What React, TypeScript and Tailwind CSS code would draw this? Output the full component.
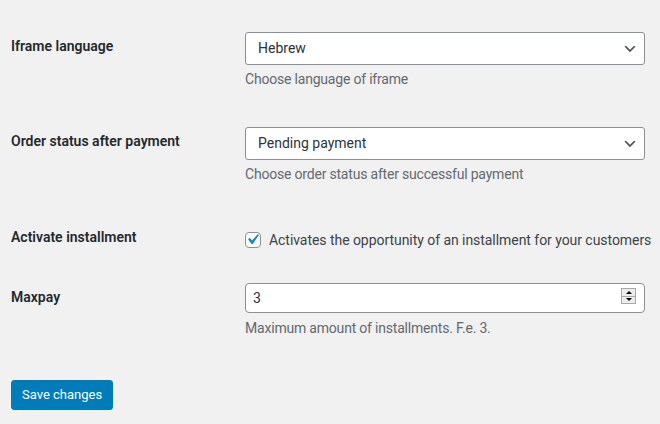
import React from "react";

function Chevron() {
  return (
    <svg width="16" height="16" viewBox="0 0 20 20" className="absolute right-[6px] top-[8px]">
      <path d="M5 6l5 5 5-5 2 1-7 7-7-7 2-1z" fill="#555" />
    </svg>
  );
}

function SelectBox({ value }: { value: string }) {
  return (
    <div className="relative h-[33px] w-[400px] rounded-[3px] border border-[#8c8f94] bg-white pl-[12px] text-[14px] leading-[31px] text-[#2c3338]">
      {value}
      <Chevron />
    </div>
  );
}

function Spinner() {
  return (
    <div className="absolute right-[8px] top-[4px] flex h-[16px] w-[15px] flex-col border border-[#a9a9a9] bg-[#ececec]">
      <div className="flex flex-1 items-center justify-center border-b border-[#a9a9a9]">
        <div className="h-0 w-0 border-x-[3px] border-b-[3px] border-x-transparent border-b-black" />
      </div>
      <div className="flex flex-1 items-center justify-center">
        <div className="h-0 w-0 border-x-[3px] border-t-[3px] border-x-transparent border-t-black" />
      </div>
    </div>
  );
}

export default function App() {
  return (
    <div className="min-h-screen bg-[#f1f1f1] font-['Roboto','Liberation_Sans',sans-serif] text-[14px] text-[#23282d]">
      <div className="pl-[11px] pt-[32px]">
        {/* Row 1 */}
        <div className="flex">
          <div className="w-[234px] pt-[4px] font-semibold leading-[20px]">Iframe language</div>
          <div className="w-[400px]">
            <SelectBox value="Hebrew" />
            <p className="mt-[4px] leading-[20px] tracking-[-0.2px] text-[#646970]">Choose language of iframe</p>
          </div>
        </div>

        {/* Row 2 */}
        <div className="mt-[38px] flex">
          <div className="w-[234px] pt-[4px] font-semibold leading-[20px]">Order status after payment</div>
          <div className="w-[400px]">
            <SelectBox value="Pending payment" />
            <p className="mt-[4px] leading-[20px] tracking-[-0.2px] text-[#646970]">Choose order status after successful payment</p>
          </div>
        </div>

        {/* Row 3 */}
        <div className="mt-[43px] flex">
          <div className="w-[234px] font-semibold leading-[20px]">Activate installment</div>
          <div className="mt-[3px] flex h-[20px] items-center gap-[8px] whitespace-nowrap">
            <div className="relative h-[16px] w-[16px] rounded-[4px] border border-[#8c8f94] bg-white">
              <svg width="21" height="21" viewBox="0 0 20 20" className="absolute left-[-4px] top-[-4px]">
                <path d="M14.83 4.89l1.34.94-5.81 8.38H9.02L5.78 9.67l1.34-1.25 2.57 2.4z" fill="#1e8cbe" />
              </svg>
            </div>
            <span className="leading-[20px] tracking-[-0.05px] text-[#3c434a]">Activates the opportunity of an installment for your customers</span>
          </div>
        </div>

        {/* Row 4 */}
        <div className="mt-[33px] flex">
          <div className="w-[234px] pt-[4px] font-semibold leading-[20px]">Maxpay</div>
          <div className="w-[400px]">
            <div className="relative h-[30px] w-[400px] rounded-[4px] border border-[#8c8f94] bg-white pl-[7px] leading-[28px] text-[#2c3338]">
              3
              <Spinner />
            </div>
            <p className="mt-[5px] leading-[20px] tracking-[-0.2px] text-[#646970]">Maximum amount of installments. F.e. 3.</p>
          </div>
        </div>

        {/* Button */}
        <div className="mt-[42px]">
          <button className="h-[30px] rounded-[3px] border border-[#007cba] bg-[#007cba] px-[10px] text-[13px] leading-[28px] text-white">
            Save changes
          </button>
        </div>
      </div>
    </div>
  );
}
